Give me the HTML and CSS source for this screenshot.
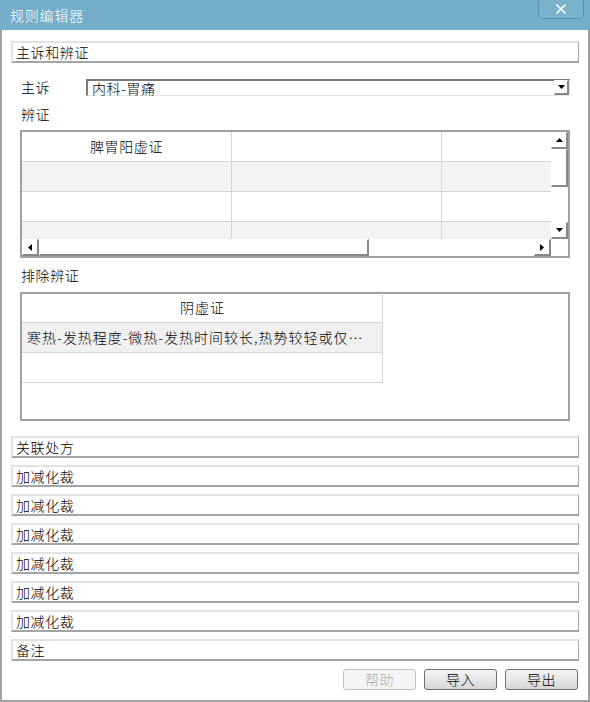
FILE: index.html
```html
<!DOCTYPE html>
<html lang="zh-CN">
<head>
    <meta charset="UTF-8">
    <meta name="viewport" content="width=device-width, initial-scale=1.0">
    <title>规则编辑器</title>
    <link rel="stylesheet" href="styles.css">
</head>
<body>

<div class="window">
    <div class="titlebar">
        <span class="title">规则编辑器</span>
        <button class="close-btn" aria-label="关闭">
            <svg width="12" height="12" viewBox="0 0 12 12"><path d="M1.5 1.5 L10.5 10.5 M10.5 1.5 L1.5 10.5" stroke="#fff" stroke-width="1.6" fill="none"/></svg>
        </button>
    </div>

    <div class="content">
        <div class="bar">主诉和辨证</div>
        <div class="section">
            <div class="field-row">
                <span class="field-label">主诉</span>
                <div class="select">
                    <span class="select-text">内科-胃痛</span>
                    <span class="scroll-btn select-btn">
                        <svg width="7" height="4" viewBox="0 0 7 4"><polygon points="0,0 7,0 3.5,4" fill="#000"/></svg>
                    </span>
                </div>
            </div>

            <div class="sub-label">辨证</div>
            <div class="grid-box">
                <div class="grid-view" id="syndrome-grid"></div>
                <div class="vscroll">
                    <span class="scroll-btn">
                        <svg width="7" height="4" viewBox="0 0 7 4"><polygon points="3.5,0 7,4 0,4" fill="#000"/></svg>
                    </span>
                    <span class="scroll-thumb v-thumb"></span>
                    <span class="scroll-fill"></span>
                    <span class="scroll-btn">
                        <svg width="7" height="4" viewBox="0 0 7 4"><polygon points="0,0 7,0 3.5,4" fill="#000"/></svg>
                    </span>
                </div>
                <div class="hscroll">
                    <span class="scroll-btn">
                        <svg width="4" height="7" viewBox="0 0 4 7"><polygon points="4,0 4,7 0,3.5" fill="#000"/></svg>
                    </span>
                    <span class="scroll-thumb h-thumb"></span>
                    <span class="scroll-fill"></span>
                    <span class="scroll-btn">
                        <svg width="4" height="7" viewBox="0 0 4 7"><polygon points="0,0 4,3.5 0,7" fill="#000"/></svg>
                    </span>
                </div>
                <div class="corner"></div>
            </div>

            <div class="sub-label">排除辨证</div>
            <div class="list-box">
                <div class="list">
                    <div class="list-row list-head">阴虚证</div>
                    <div class="list-row list-alt">寒热-发热程度-微热-发热时间较长,热势较轻或仅…</div>
                    <div class="list-row"></div>
                </div>
            </div>
        </div>

        <div class="bar">关联处方</div>
        <div class="bar">加减化裁</div>
        <div class="bar">加减化裁</div>
        <div class="bar">加减化裁</div>
        <div class="bar">加减化裁</div>
        <div class="bar">加减化裁</div>
        <div class="bar">加减化裁</div>
        <div class="bar">备注</div>

        <div class="actions">
            <button class="btn" disabled>帮助</button>
            <button class="btn">导入</button>
            <button class="btn">导出</button>
        </div>
    </div>
</div>

<script>
    const rows = [
        ["脾胃阳虚证", "", ""],
        ["", "", ""],
        ["", "", ""],
        ["", "", ""]
    ];

    function buildGrid(rows) {
        const view = document.getElementById("syndrome-grid");
        rows.forEach((cells, i) => {
            const row = document.createElement("div");
            row.className = "grid-row" + (i % 2 === 1 ? " grid-alt" : "");
            cells.forEach(text => {
                const cell = document.createElement("div");
                cell.className = "grid-cell";
                cell.textContent = text;
                row.appendChild(cell);
            });
            view.appendChild(row);
        });
    }

    buildGrid(rows);
</script>

</body>
</html>
```

FILE: styles.css
```css
body {
    margin: 0;
    font-family: "Noto Sans CJK SC", "Liberation Sans", sans-serif;
    font-size: 14px;
    font-weight: 300;
    letter-spacing: 0.6px;
    color: #000;
    background: #fff;
}
.window {
    width: 590px;
    height: 702px;
    display: flex;
    flex-direction: column;
}
.titlebar {
    height: 30px;
    flex: none;
    background: #75aec8;
    display: flex;
    justify-content: space-between;
    align-items: flex-start;
}
.title {
    color: #fff;
    font-size: 14px;
    letter-spacing: 0.8px;
    line-height: 30px;
    padding-left: 10px;
}
.close-btn {
    width: 46px;
    height: 19px;
    margin-right: 6px;
    padding: 0;
    border: 1px solid #5c8ea8;
    border-top: 0;
    border-radius: 0 0 5px 5px;
    background: #7ab2cb;
    display: flex;
    align-items: center;
    justify-content: center;
}
.content {
    flex: 1;
    border: 2px solid #a0a0a0;
    border-top: 0;
    padding: 11px 9px 0;
}
.bar {
    height: 22px;
    box-sizing: border-box;
    border: 2px solid #a4a4a4;
    border-top-color: #e2e2e2;
    border-left-color: #e2e2e2;
    border-right-width: 1px;
    padding-left: 3px;
    line-height: 18px;
    margin-top: 7px;
}
.bar:first-child {
    margin-top: 0;
}
.section {
    padding: 0 9px;
    margin-bottom: 15px;
}
.field-row {
    display: flex;
    margin-top: 16px;
    height: 17px;
    padding-left: 1px;
}
.field-label {
    width: 65px;
    line-height: 17px;
}
.select {
    flex: 1;
    display: flex;
    box-sizing: border-box;
    border: 2px solid #7a7a7a;
    border-right: 1px solid #e4e4e4;
    border-bottom: 1px solid #e4e4e4;
}
.select-text {
    flex: 1;
    line-height: 14px;
    padding-left: 4px;
}
.sub-label {
    line-height: 24px;
    margin-top: 6px;
    padding-left: 1px;
}
.grid-box + .sub-label {
    margin-top: 5px;
}
.scroll-btn {
    width: 17px;
    height: 17px;
    flex: none;
    box-sizing: border-box;
    border: 2px solid #888;
    border-top: 1px solid #fff;
    border-left: 1px solid #fff;
    background: #fff;
    display: flex;
    align-items: center;
    justify-content: center;
}
.select-btn {
    width: 15px;
    height: 15px;
    margin-top: -1px;
}
.grid-box {
    margin-top: 4px;
    height: 128px;
    box-sizing: border-box;
    border: 2px solid #a0a0a0;
    display: grid;
    grid-template-columns: 1fr 17px;
    grid-template-rows: 1fr 17px;
}
.grid-view {
    overflow: hidden;
}
.grid-row {
    display: flex;
    height: 30px;
    box-sizing: border-box;
    border-bottom: 1px solid #d6d6d6;
}
.grid-alt {
    background: #f3f3f3;
}
.grid-cell {
    width: 210px;
    flex: none;
    box-sizing: border-box;
    border-right: 1px solid #d6d6d6;
    text-align: center;
    line-height: 28px;
}
.vscroll {
    display: flex;
    flex-direction: column;
}
.hscroll {
    display: flex;
}
.scroll-thumb {
    box-sizing: border-box;
    border: 2px solid #888;
    border-top: 1px solid #fff;
    border-left: 1px solid #fff;
    background: #fff;
    flex: none;
}
.v-thumb {
    height: 38px;
}
.h-thumb {
    width: 330px;
}
.scroll-fill {
    flex: 1;
}
.corner {
    background: #fff;
}
.list-box {
    margin-top: 5px;
    height: 129px;
    box-sizing: border-box;
    border: 2px solid #a0a0a0;
}
.list {
    width: 360px;
    border-right: 1px solid #d6d6d6;
    margin-top: -1px;
}
.list-row {
    height: 30px;
    box-sizing: border-box;
    border-bottom: 1px solid #d6d6d6;
    line-height: 29px;
    padding: 0 4px 0 5px;
    letter-spacing: 1px;
    white-space: nowrap;
}
.list-head {
    text-align: center;
}
.list-alt {
    background: #f0f0f0;
}
.actions {
    display: flex;
    justify-content: flex-end;
    gap: 8px;
    margin-top: 8px;
    padding-right: 1px;
}
.btn {
    width: 73px;
    height: 21px;
    padding: 0;
    font-family: inherit;
    font-size: 14px;
    font-weight: 300;
    letter-spacing: 0.6px;
    line-height: 17px;
    color: #000;
    border: 1px solid #6f6f6f;
    border-radius: 3px;
    background: linear-gradient(#f4f4f4, #e6e6e6 50%, #d6d6d6);
}
.btn:disabled {
    color: #a8a8a8;
    border-color: #c2c2c2;
    background: #f4f4f4;
}
```
